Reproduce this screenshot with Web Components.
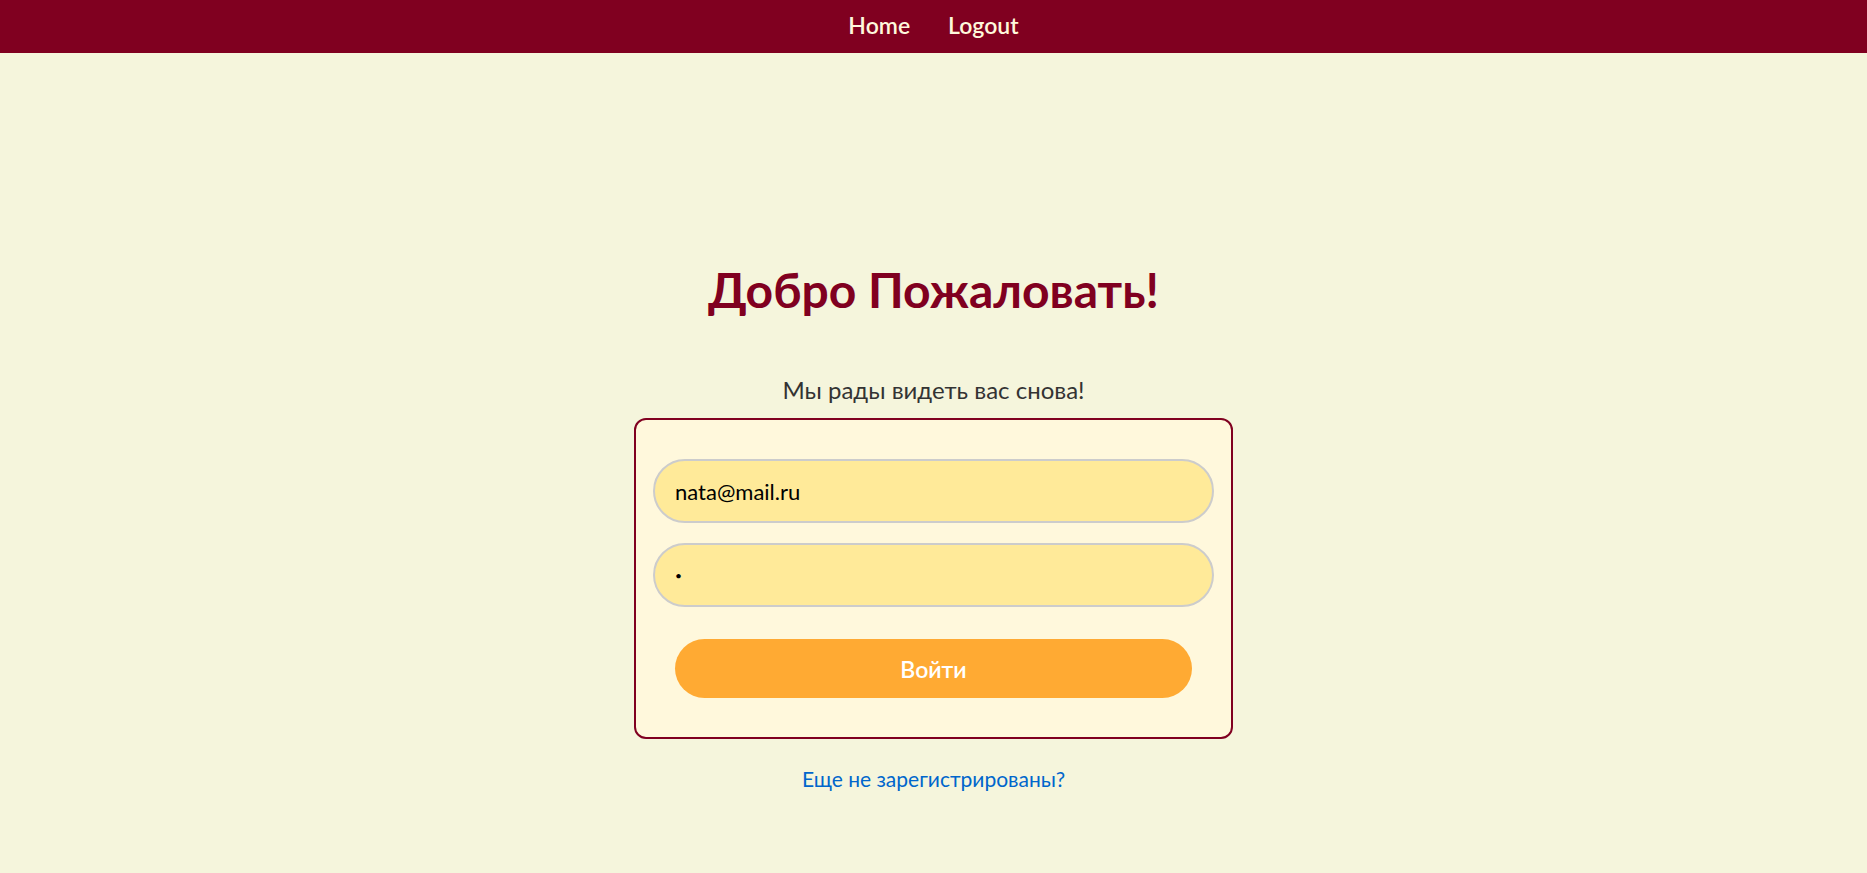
<!DOCTYPE html>
<html lang="ru">
<head>
<meta charset="utf-8">
<meta name="viewport" content="width=device-width, initial-scale=1">
<title>Добро Пожаловать!</title>
<style>
  body {
    margin: 0;
    background: #f5f5dc;
    color: #333;
    font-family: Lato, "Noto Sans", sans-serif;
  }
</style>
</head>
<body>
<login-page></login-page>

<script>
class BaseElement extends HTMLElement {
  constructor() {
    super();
    this.attachShadow({ mode: "open" }).innerHTML = this.constructor.markup;
  }
}

customElements.define("nav-bar", class extends BaseElement {
  static markup = `
    <style>
      :host { display: block; background: #800020; }
      nav {
        display: flex;
        justify-content: center;
        gap: 38px;
        padding: 9px 16px 12px;
      }
      ::slotted(a) {
        color: #fff8dc;
        font-size: 23px;
        font-weight: 600;
        line-height: 32px;
        text-decoration: none;
      }
    </style>
    <nav><slot></slot></nav>`;
});

customElements.define("page-heading", class extends BaseElement {
  static markup = `
    <style>
      :host { display: block; text-align: center; }
      h1 {
        margin: 0 0 48px;
        color: #800020;
        font-size: 48px;
        font-weight: 700;
        line-height: 72px;
      }
      p { margin: 0 0 12px; font-size: 24px; line-height: 32px; }
    </style>
    <h1><slot name="title"></slot></h1>
    <p><slot></slot></p>`;
});

customElements.define("pill-input", class extends BaseElement {
  static markup = `
    <style>
      :host { display: block; }
      input {
        display: block;
        box-sizing: border-box;
        width: 100%;
        height: 64px;
        padding: 0 20px;
        border: 2px solid #ccc;
        border-radius: 32px;
        outline: none;
        background: #ffea99;
        color: #000;
        font-family: inherit;
        font-size: 22px;
      }
      input[type="password"] { font-size: 12px; }
    </style>
    <input id="field">`;
  connectedCallback() {
    const input = this.shadowRoot.querySelector("input");
    input.type = this.getAttribute("type");
    input.value = this.getAttribute("value");
    input.setAttribute("aria-label", this.getAttribute("label"));
  }
});

customElements.define("pill-button", class extends BaseElement {
  static markup = `
    <style>
      :host { display: block; }
      button {
        display: block;
        width: 100%;
        height: 59px;
        padding: 0;
        border: 0;
        border-radius: 30px;
        background: #ffaa33;
        color: #fff;
        font-family: inherit;
        font-size: 23px;
        font-weight: 600;
        cursor: pointer;
      }
    </style>
    <button type="submit"><slot></slot></button>`;
});

customElements.define("login-form", class extends BaseElement {
  static markup = `
    <style>
      :host { display: block; width: 100%; max-width: 599px; }
      form {
        display: flex;
        flex-direction: column;
        gap: 20px;
        padding: 39px 17px;
        border: 2px solid #800020;
        border-radius: 12px;
        background: #fff8dc;
      }
      pill-button { margin: 12px 22px 0; }
    </style>
    <form>
      <pill-input type="email" value="nata@mail.ru" label="Email"></pill-input>
      <pill-input type="password" value="1" label="Пароль"></pill-input>
      <pill-button>Войти</pill-button>
    </form>`;
});

customElements.define("login-page", class extends BaseElement {
  static markup = `
    <style>
      :host { display: flex; flex-direction: column; min-height: 100vh; }
      main {
        display: flex;
        flex: 1;
        flex-direction: column;
        align-items: center;
        padding: 201px 16px 48px;
      }
      .register {
        margin-top: 24px;
        color: #0066cc;
        font-size: 21px;
        line-height: 32px;
        text-decoration: none;
      }
    </style>
    <nav-bar>
      <a href="#home">Home</a>
      <a href="#logout">Logout</a>
    </nav-bar>
    <main>
      <page-heading>
        <span slot="title">Добро Пожаловать!</span>
        Мы рады видеть вас снова!
      </page-heading>
      <login-form></login-form>
      <a class="register" href="#register">Еще не зарегистрированы?</a>
    </main>`;
});
</script>
</body>
</html>
